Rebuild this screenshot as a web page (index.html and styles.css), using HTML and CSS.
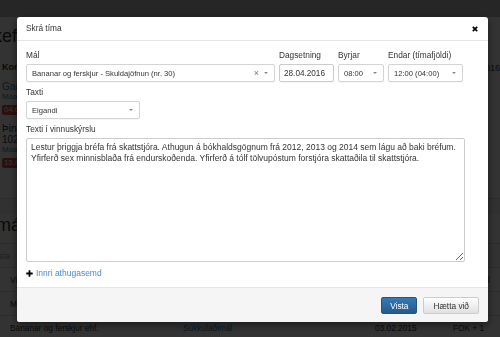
FILE: index.html
```html
<html lang="is">
<head>
    <meta charset="UTF-8">
    <meta name="viewport" content="width=device-width, initial-scale=1.0">
    <title>Skrá tíma</title>
    <link rel="stylesheet" href="styles.css">
</head>
<body>
    <div class="page">
        <div class="topbar"></div>
        <div class="columns">
            <div class="col-left">
                <h1 class="page-title">Verkefni</h1>
                <div class="section-head">Komandi</div>
                <ul class="task-list">
                    <li>
                        <a class="task-name">Gagnaöflun</a>
                        <a class="task-client">Móar ehf.</a>
                        <span class="tag">04.05.2016</span>
                    </li>
                    <li>
                        <span class="task-name">Þinghald</span>
                        <span class="task-name">102 Reykjavík</span>
                        <a class="task-client">Móar ehf.</a>
                        <span class="tag">15.05.2016</span>
                    </li>
                </ul>
            </div>
            <div class="col-right">
                <div class="side-date">2. jún, 2016</div>
                <div class="side-link">Market</div>
            </div>
        </div>
        <div class="band"></div>
        <h2 class="cases-title">Mín mál</h2>
        <div class="cases">
            <div class="cases-row cases-head"><span class="filter">Leitarsía</span><span></span><span></span><span></span></div>
            <div class="cases-row"><span>Viðskiptamaður ehf.</span><a>Launamál</a><span>01.03.2015</span><span>Skattamál</span></div>
            <div class="cases-row"><span>Móar ehf.</span><a>Gagnaöflun</a><span>12.02.2015</span><span>FOK</span></div>
            <div class="cases-row"><span>Bananar og ferskjur ehf.</span><a>Súkkulaðimál</a><span>03.02.2015</span><span>FOK + 1</span></div>
        </div>
    </div>

    <div class="backdrop"></div>

    <div class="modal">
        <div class="modal-header">
            <h4 class="modal-title">Skrá tíma</h4>
            <svg class="close" width="6" height="6" viewBox="0 0 6 6"><path d="M0.8 0.8L5.2 5.2M5.2 0.8L0.8 5.2" stroke="#000" stroke-width="1.7"/></svg>
        </div>
        <div class="modal-body">
            <div class="form-row">
                <div class="form-group field-mal">
                    <label>Mál</label>
                    <div class="control select">
                        <span class="select-text">Bananar og ferskjur - Skuldajöfnun (nr. 30)</span>
                        <span class="clear">×</span>
                        <span class="arrow"></span>
                    </div>
                </div>
                <div class="form-group field-date">
                    <label>Dagsetning</label>
                    <div class="control date">28.04.2016</div>
                </div>
                <div class="form-group field-start">
                    <label>Byrjar</label>
                    <div class="control select">
                        <span class="select-text">08:00</span>
                        <span class="arrow"></span>
                    </div>
                </div>
                <div class="form-group field-end">
                    <label>Endar (tímafjöldi)</label>
                    <div class="control select">
                        <span class="select-text">12:00 (04:00)</span>
                        <span class="arrow"></span>
                    </div>
                </div>
            </div>
            <div class="form-group field-taxti">
                <label>Taxti</label>
                <div class="control select">
                    <span class="select-text">Eigandi</span>
                    <span class="arrow"></span>
                </div>
            </div>
            <div class="form-group">
                <label>Texti í vinnuskýrslu</label>
                <textarea class="report">Lestur þriggja bréfa frá skattstjóra. Athugun á bókhaldsgögnum frá 2012, 2013 og 2014 sem lágu að baki bréfum. Yfirferð sex minnisblaða frá endurskoðenda. Yfirferð á tólf tölvupóstum forstjóra skattaðila til skattstjóra.</textarea>
            </div>
            <a class="add-note">
                <svg width="7" height="7" viewBox="0 0 7 7"><path d="M3.5 0.3V6.7M0.3 3.5H6.7" stroke="#000" stroke-width="1.8"/></svg>
                Innri athugasemd
            </a>
        </div>
        <div class="modal-footer">
            <button class="btn btn-primary">Vista</button>
            <button class="btn btn-default">Hætta við</button>
        </div>
    </div>
</body>
</html>
```

FILE: styles.css
```css
* {
    box-sizing: border-box;
}
body {
    margin: 0;
    width: 500px;
    height: 337px;
    overflow: hidden;
    font-family: "Liberation Sans", Arial, sans-serif;
    color: #333;
    background: #fff;
}
a {
    color: #337ab7;
    text-decoration: none;
}

/* page behind the dialog */
.page {
    white-space: nowrap;
}
.topbar {
    height: 17px;
    background: #bfbfbf;
}
.columns {
    display: flex;
    height: 181px;
}
.col-left {
    width: 472px;
    padding-left: 2px;
}
.page-title {
    margin: 8px 0 0 -36px;
    font-size: 18px;
    line-height: 22px;
    font-weight: normal;
}
.section-head {
    margin-top: 15px;
    font-size: 9px;
    line-height: 11px;
    font-weight: bold;
}
.task-list {
    list-style: none;
    margin: 8px 0 0;
    padding: 0;
}
.task-list li {
    display: flex;
    flex-direction: column;
    align-items: flex-start;
    margin-bottom: 8px;
}
.task-name {
    font-size: 10px;
    line-height: 11px;
}
.task-client {
    font-size: 8px;
    line-height: 10px;
}
.tag {
    margin-top: 3px;
    padding: 0 2px;
    font-size: 8px;
    line-height: 10px;
    color: #fff;
    background: #d9534f;
    border-radius: 2px;
}
.col-right {
    flex: 1;
    padding-top: 46px;
    font-size: 9px;
}
.side-date {
    line-height: 11px;
}
.side-link {
    margin-top: 11px;
    font-size: 10px;
    line-height: 12px;
}
.band {
    height: 16px;
    border-top: 1px solid #ddd;
    background: #f2f2f2;
}
.cases-title {
    margin: 0 0 7px -39px;
    font-size: 18px;
    line-height: 22px;
    font-weight: normal;
}
.cases {
    border-top: 1px solid #ddd;
    font-size: 8.3px;
}
.cases-row {
    display: grid;
    grid-template-columns: 173px 192px 78px 80px;
    align-items: center;
    height: 24px;
    padding-left: 10px;
    border-bottom: 1px solid #ddd;
}
.cases-head {
    background: #f7f7f7;
    color: #999;
}
.filter {
    margin-left: -32px;
}

.backdrop {
    position: fixed;
    top: 0;
    left: 0;
    right: 0;
    bottom: 0;
    background: rgba(0, 0, 0, 0.8);
}

/* dialog */
.modal {
    position: fixed;
    top: 17px;
    left: 17px;
    width: 471px;
    background: #fff;
    border-radius: 3px;
    box-shadow: 0 3px 9px rgba(0, 0, 0, 0.5);
    overflow: hidden;
}
.modal-header {
    display: flex;
    justify-content: space-between;
    align-items: center;
    padding: 6px 10px 6px 9px;
    border-bottom: 1px solid #e5e5e5;
}
.modal-title {
    margin: 0;
    font-size: 8.3px;
    line-height: 11px;
    font-weight: normal;
}
.modal-body {
    padding: 9px 9px 8px;
}
.form-row {
    display: flex;
    gap: 4px;
}
.form-group {
    margin-bottom: 5px;
}
.field-mal {
    width: 249px;
}
.field-date {
    width: 55px;
}
.field-start {
    width: 46px;
}
.field-end {
    width: 75px;
}
.field-taxti {
    width: 114px;
}
label {
    display: block;
    margin-bottom: 3px;
    font-size: 8.3px;
    line-height: 11px;
}
.control {
    display: flex;
    align-items: center;
    height: 18px;
    padding: 0 5px;
    border: 1px solid #d4d4d4;
    border-radius: 2px;
    box-shadow: 0 1px 1px rgba(0, 0, 0, 0.04);
    font-size: 7.6px;
}
.date {
    padding: 0 4px;
    font-size: 8.2px;
    border-color: #ccc;
}
.select-text {
    flex: 1;
    overflow: hidden;
}
.clear {
    margin-right: 5px;
    font-size: 9px;
    color: #777;
}
.arrow {
    width: 0;
    height: 0;
    margin-right: 1px;
    border-left: 2px solid transparent;
    border-right: 2px solid transparent;
    border-top: 2.5px solid #888;
}
.report {
    display: block;
    width: 439px;
    height: 124px;
    margin: 0;
    padding: 3px 4px;
    border: 1px solid #ccc;
    border-radius: 2px;
    font-family: "Liberation Sans", Arial, sans-serif;
    font-size: 8.5px;
    line-height: 11px;
    color: #333;
    resize: vertical;
}
.add-note {
    display: flex;
    align-items: center;
    gap: 3px;
    margin-top: 6px;
    font-size: 8.5px;
    line-height: 11px;
    color: #4a8bd4;
}
.modal-footer {
    display: flex;
    justify-content: flex-end;
    gap: 6px;
    padding: 9px 9px 8px;
    border-top: 1px solid #e5e5e5;
    background: #f5f5f5;
}
.btn {
    height: 17px;
    padding: 0 8px;
    border-radius: 2px;
    font-family: "Liberation Sans", Arial, sans-serif;
    font-size: 8.3px;
    cursor: pointer;
}
.btn-primary {
    color: #fff;
    background: linear-gradient(#337ab7, #265a88);
    border: 1px solid #245580;
}
.btn-default {
    padding: 0 9px;
    color: #333;
    background: linear-gradient(#fff, #e0e0e0);
    border: 1px solid #ccc;
}
```
